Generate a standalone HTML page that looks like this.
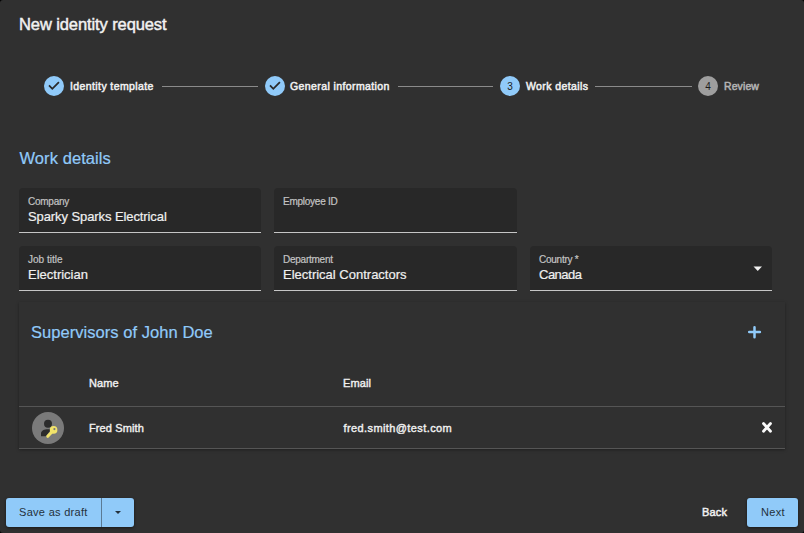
<!DOCTYPE html>
<html><head><meta charset="utf-8">
<style>
*{box-sizing:border-box;margin:0;padding:0}
html,body{width:804px;height:533px;overflow:hidden;background:#000}
body{font-family:"Liberation Sans",sans-serif;position:relative}
#dlg{position:absolute;left:0;top:0;width:804px;height:533px;background:#303030;border-radius:3px;overflow:hidden}
.a{position:absolute;white-space:nowrap}
.title{left:19px;top:14.5px;font-size:16.5px;color:#f2f2f2;-webkit-text-stroke:0.45px #f2f2f2;letter-spacing:-0.1px}
.circ{position:absolute;width:20px;height:20px;border-radius:50%;top:76px}
.blue{background:#90caf9}
.grey{background:#9e9e9e}
.num{font-size:10px;color:#1c1c1c;text-align:center;line-height:21px}
.slab{top:80.2px;font-size:10.5px;color:#f0f0f0;-webkit-text-stroke:0.5px #f0f0f0;letter-spacing:0.4px}
.line{position:absolute;top:86px;height:1px;background:#8a8a8a}
.h2{font-size:16.5px;color:#90caf9;-webkit-text-stroke:0.2px #90caf9;letter-spacing:0.08px}
.fld{position:absolute;height:45px;background:#282828;border-radius:4px 4px 0 0;border-bottom:1px solid #c6c6c6}
.fl{position:absolute;left:9px;top:8px;font-size:10px;color:#c4c4c4;-webkit-text-stroke:0.2px #c4c4c4;letter-spacing:-0.25px}
.fv{position:absolute;left:9px;top:21px;font-size:13px;color:#f0f0f0;-webkit-text-stroke:0.2px #f0f0f0}
#card{position:absolute;left:19px;top:302px;width:766px;height:147px;background:#303030;box-shadow:0 1px 3px rgba(0,0,0,.35)}
.th{font-size:11px;color:#f0f0f0;-webkit-text-stroke:0.4px #f0f0f0;letter-spacing:0.12px}
.hr{position:absolute;height:1px;background:#555}
.btn{position:absolute;background:#90caf9;border-radius:3px;height:29px;top:498px;box-shadow:0 1px 3px rgba(0,0,0,.5)}
.bt{font-size:11px;color:#24313c;letter-spacing:0.3px}
</style></head><body>
<div id="dlg">
<div class="a title">New identity request</div>

<!-- stepper -->
<div class="circ blue" style="left:44px"><svg width="20" height="20" viewBox="0 0 20 20"><path d="M5 9.4 L8.3 12.8 L14.9 6.2" fill="none" stroke="#2a2a2a" stroke-width="1.8"/></svg></div>
<div class="a slab" style="left:70px">Identity template</div>
<div class="line" style="left:162px;width:96px"></div>
<div class="circ blue" style="left:265px"><svg width="20" height="20" viewBox="0 0 20 20"><path d="M5 9.4 L8.3 12.8 L14.9 6.2" fill="none" stroke="#2a2a2a" stroke-width="1.8"/></svg></div>
<div class="a slab" style="left:290px">General information</div>
<div class="line" style="left:398px;width:95px"></div>
<div class="circ blue num" style="left:500px">3</div>
<div class="a slab" style="left:526px">Work details</div>
<div class="line" style="left:595px;width:97px"></div>
<div class="circ grey num" style="left:698px">4</div>
<div class="a slab" style="left:724px;color:#b4b4b4;-webkit-text-stroke:0.5px #b4b4b4;letter-spacing:0.1px">Review</div>

<div class="a h2" style="left:19.5px;top:149px">Work details</div>

<div class="fld" style="left:19px;top:188px;width:242px"><div class="fl">Company</div><div class="fv" style="letter-spacing:-0.09px">Sparky Sparks Electrical</div></div>
<div class="fld" style="left:274px;top:188px;width:243px"><div class="fl">Employee ID</div></div>
<div class="fld" style="left:19px;top:246px;width:242px"><div class="fl" style="letter-spacing:0">Job title</div><div class="fv">Electrician</div></div>
<div class="fld" style="left:274px;top:246px;width:243px"><div class="fl">Department</div><div class="fv">Electrical Contractors</div></div>
<div class="fld" style="left:530px;top:246px;width:242px"><div class="fl">Country *</div><div class="fv" style="letter-spacing:-0.5px">Canada</div>
<svg style="position:absolute;left:223px;top:20px" width="10" height="6" viewBox="0 0 10 6"><path d="M0.5 0.5 L9 0.5 L4.75 5 Z" fill="#f0f0f0"/></svg></div>

<div id="card"></div>
<div class="a h2" style="left:31px;top:323px;letter-spacing:0.05px">Supervisors of John Doe</div>
<svg class="a" style="left:747px;top:325px" width="15" height="15" viewBox="0 0 15 15"><path d="M2.2 7 H12.9 M7.5 2.2 V12.2" stroke="#90caf9" stroke-width="2.5" stroke-linecap="round"/></svg>
<div class="a th" style="left:89px;top:377px">Name</div>
<div class="a th" style="left:343px;top:377px">Email</div>
<div class="hr" style="left:19px;top:406px;width:766px"></div>
<svg class="a" style="left:32px;top:412px" width="32" height="32" viewBox="0 0 32 32">
<circle cx="16" cy="16" r="16" fill="#7a7a7a"/>
<circle cx="16" cy="11.7" r="4" fill="#2c2c2c"/>
<path d="M9 24.2 V21.5 C9 18.8 12 17.3 16 17.3 C17 17.3 18 17.4 19 17.7 L13.8 24.2 Z" fill="#2c2c2c"/>
<circle cx="21.6" cy="17.9" r="3.8" fill="#f2e36a"/>
<circle cx="22.4" cy="17.1" r="1.1" fill="#7a7a7a"/>
<path d="M19.6 20.2 L15.8 24.3" stroke="#f2e36a" stroke-width="3" stroke-linecap="round"/>
</svg>
<div class="a th" style="left:89px;top:422px">Fred Smith</div>
<div class="a th" style="left:343.5px;top:422px;letter-spacing:0.4px">fred.smith@test.com</div>
<svg class="a" style="left:761px;top:421px" width="12" height="12" viewBox="0 0 12 12"><path d="M2.5 2.5 L9.5 10.2 M9.5 2.5 L2.5 10.2" stroke="#fafafa" stroke-width="2.8" stroke-linecap="round"/></svg>
<div class="hr" style="left:19px;top:448px;width:766px"></div>

<div class="btn" style="left:6px;width:128px">
<div class="a bt" style="left:13px;top:8px">Save as draft</div>
<div style="position:absolute;left:95px;top:0;width:1px;height:29px;background:#5a7a95"></div>
<svg style="position:absolute;left:109px;top:12.5px" width="6" height="3" viewBox="0 0 6 3"><path d="M0 0 H6 L3 3 Z" fill="#24313c"/></svg>
</div>
<div class="a" style="left:702px;top:506px;font-size:11px;-webkit-text-stroke:0.45px #f0f0f0;letter-spacing:0.15px;color:#f0f0f0">Back</div>
<div class="btn" style="left:747px;width:51px"><div class="a bt" style="left:14px;top:8px">Next</div></div>
</div>
</body></html>
